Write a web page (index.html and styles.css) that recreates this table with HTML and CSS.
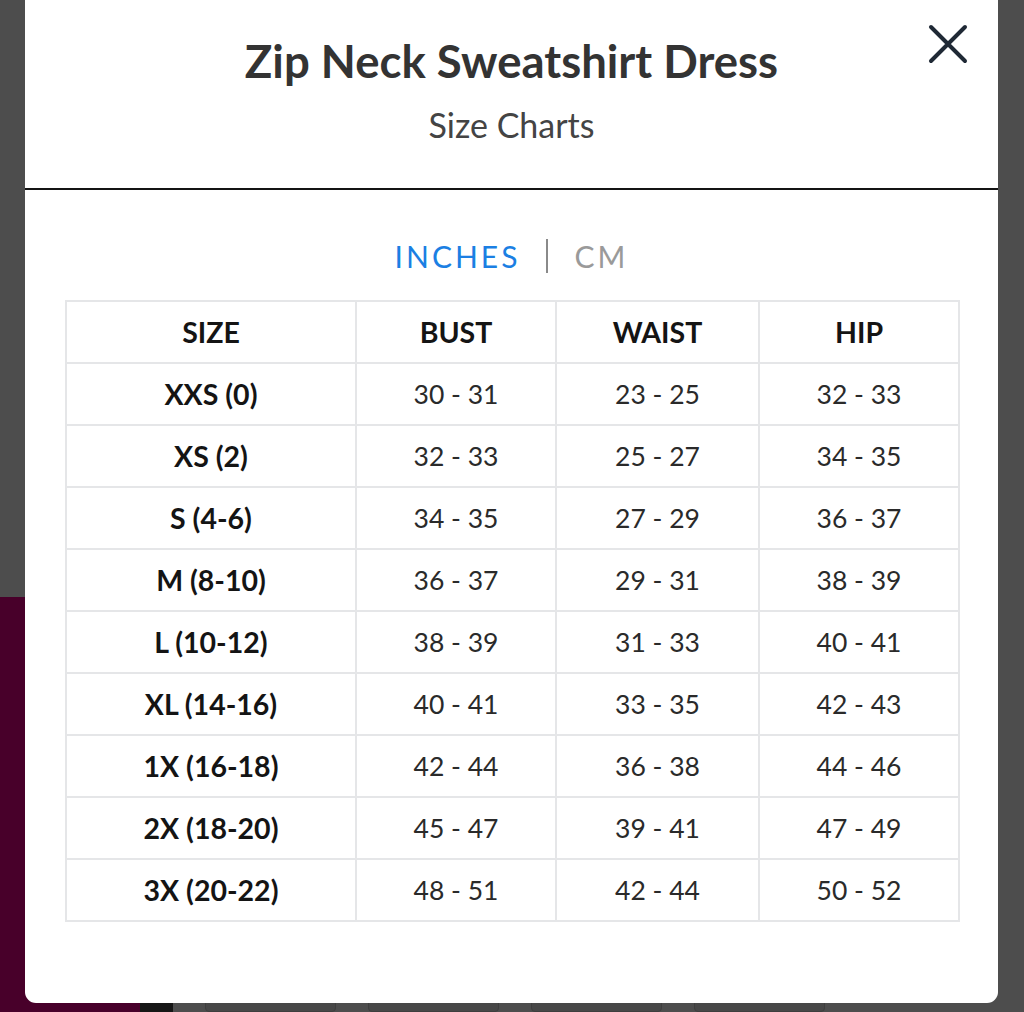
FILE: index.html
```html
<!DOCTYPE html>
<html lang="en">
<head>
<meta charset="utf-8">
<title>Size Charts</title>
<link rel="stylesheet" href="styles.css">
</head>
<body>
<div class="bg-page">
  <div class="bg-side"></div>
  <div class="bg-dark"></div>
  <div class="bg-buttons">
    <span class="bg-btn"></span>
    <span class="bg-btn"></span>
    <span class="bg-btn"></span>
    <span class="bg-btn"></span>
  </div>
</div>
<div class="modal">
  <header class="modal-header">
    <h1 class="title">Zip Neck Sweatshirt Dress</h1>
    <p class="subtitle">Size Charts</p>
    <button class="close" aria-label="Close">
      <svg width="40" height="40" viewBox="0 0 40 40"><path d="M3 3 L37 37 M37 3 L3 37" stroke="#1f2935" stroke-width="4" stroke-linecap="round" fill="none"/></svg>
    </button>
  </header>
  <div class="units">
    <span class="unit active">INCHES</span>
    <span class="sep"></span>
    <span class="unit">CM</span>
  </div>
  <table class="chart">
    <colgroup>
      <col class="c1"><col class="c2"><col class="c3"><col class="c4">
    </colgroup>
    <thead>
      <tr><th>SIZE</th><th>BUST</th><th>WAIST</th><th>HIP</th></tr>
    </thead>
    <tbody>
      <tr><th>XXS (0)</th><td>30 - 31</td><td>23 - 25</td><td>32 - 33</td></tr>
      <tr><th>XS (2)</th><td>32 - 33</td><td>25 - 27</td><td>34 - 35</td></tr>
      <tr><th>S (4-6)</th><td>34 - 35</td><td>27 - 29</td><td>36 - 37</td></tr>
      <tr><th>M (8-10)</th><td>36 - 37</td><td>29 - 31</td><td>38 - 39</td></tr>
      <tr><th>L (10-12)</th><td>38 - 39</td><td>31 - 33</td><td>40 - 41</td></tr>
      <tr><th>XL (14-16)</th><td>40 - 41</td><td>33 - 35</td><td>42 - 43</td></tr>
      <tr><th>1X (16-18)</th><td>42 - 44</td><td>36 - 38</td><td>44 - 46</td></tr>
      <tr><th>2X (18-20)</th><td>45 - 47</td><td>39 - 41</td><td>47 - 49</td></tr>
      <tr><th>3X (20-22)</th><td>48 - 51</td><td>42 - 44</td><td>50 - 52</td></tr>
    </tbody>
  </table>
</div>
</body>
</html>
```
FILE: styles.css
```css
* { box-sizing: border-box; }
html, body {
  margin: 0;
  padding: 0;
  height: 1012px;
  overflow: hidden;
}
body {
  background: #4d4d4d;
  font-family: Lato, "Open Sans", sans-serif;
  position: relative;
}
.bg-page {
  height: 1012px;
  display: flex;
  align-items: flex-end;
}
.bg-side {
  width: 140px;
  height: 415px;
  background: #48002a;
}
.bg-dark {
  width: 33px;
  height: 24px;
  background: #161616;
}
.bg-buttons {
  display: flex;
  gap: 32px;
  margin-left: 32px;
  align-self: flex-end;
}
.bg-btn {
  width: 131px;
  height: 14px;
  border-radius: 4px;
  background: #474747;
  border: 1px solid #3e3e3e;
}
.modal {
  position: absolute;
  left: 25px;
  top: 0;
  width: 973px;
  height: 1003px;
  background: #fff;
  border-radius: 0 0 11px 11px;
}
.modal-header {
  position: relative;
  height: 190px;
  border-bottom: 2px solid #141414;
  text-align: center;
  padding-top: 33px;
}
.title {
  margin: 0;
  font-size: 45.5px;
  line-height: 56px;
  font-weight: 700;
  color: #333;
}
.subtitle {
  margin: 16px 0 0;
  font-size: 34px;
  line-height: 40px;
  font-weight: 400;
  color: #444;
}
.close {
  position: absolute;
  right: 30px;
  top: 24px;
  width: 40px;
  height: 40px;
  padding: 0;
  border: 0;
  background: none;
}
.close svg { display: block; }
.units {
  display: flex;
  justify-content: center;
  align-items: center;
  gap: 26px;
  margin-top: 48px;
  height: 36px;
  font-size: 30px;
  letter-spacing: 3px;
}
.unit { color: #9a9a9a; }
.unit.active { color: #1b7fe3; }
.sep {
  width: 2px;
  height: 34px;
  background: #8a8a8a;
}
.chart {
  margin: 26px 0 0 40px;
  width: 893px;
  border-collapse: collapse;
  table-layout: fixed;
}
.c1 { width: 290px; }
.c2 { width: 200px; }
.c3 { width: 203px; }
.c4 { width: 200px; }
.chart th, .chart td {
  border: 2px solid #e5e6e8;
  height: 62px;
  padding: 0;
  text-align: center;
}
.chart th {
  font-size: 28.5px;
  font-weight: 700;
  color: #141414;
}
.chart td {
  font-size: 26.5px;
  font-weight: 400;
  color: #2a2a2a;
}
```
